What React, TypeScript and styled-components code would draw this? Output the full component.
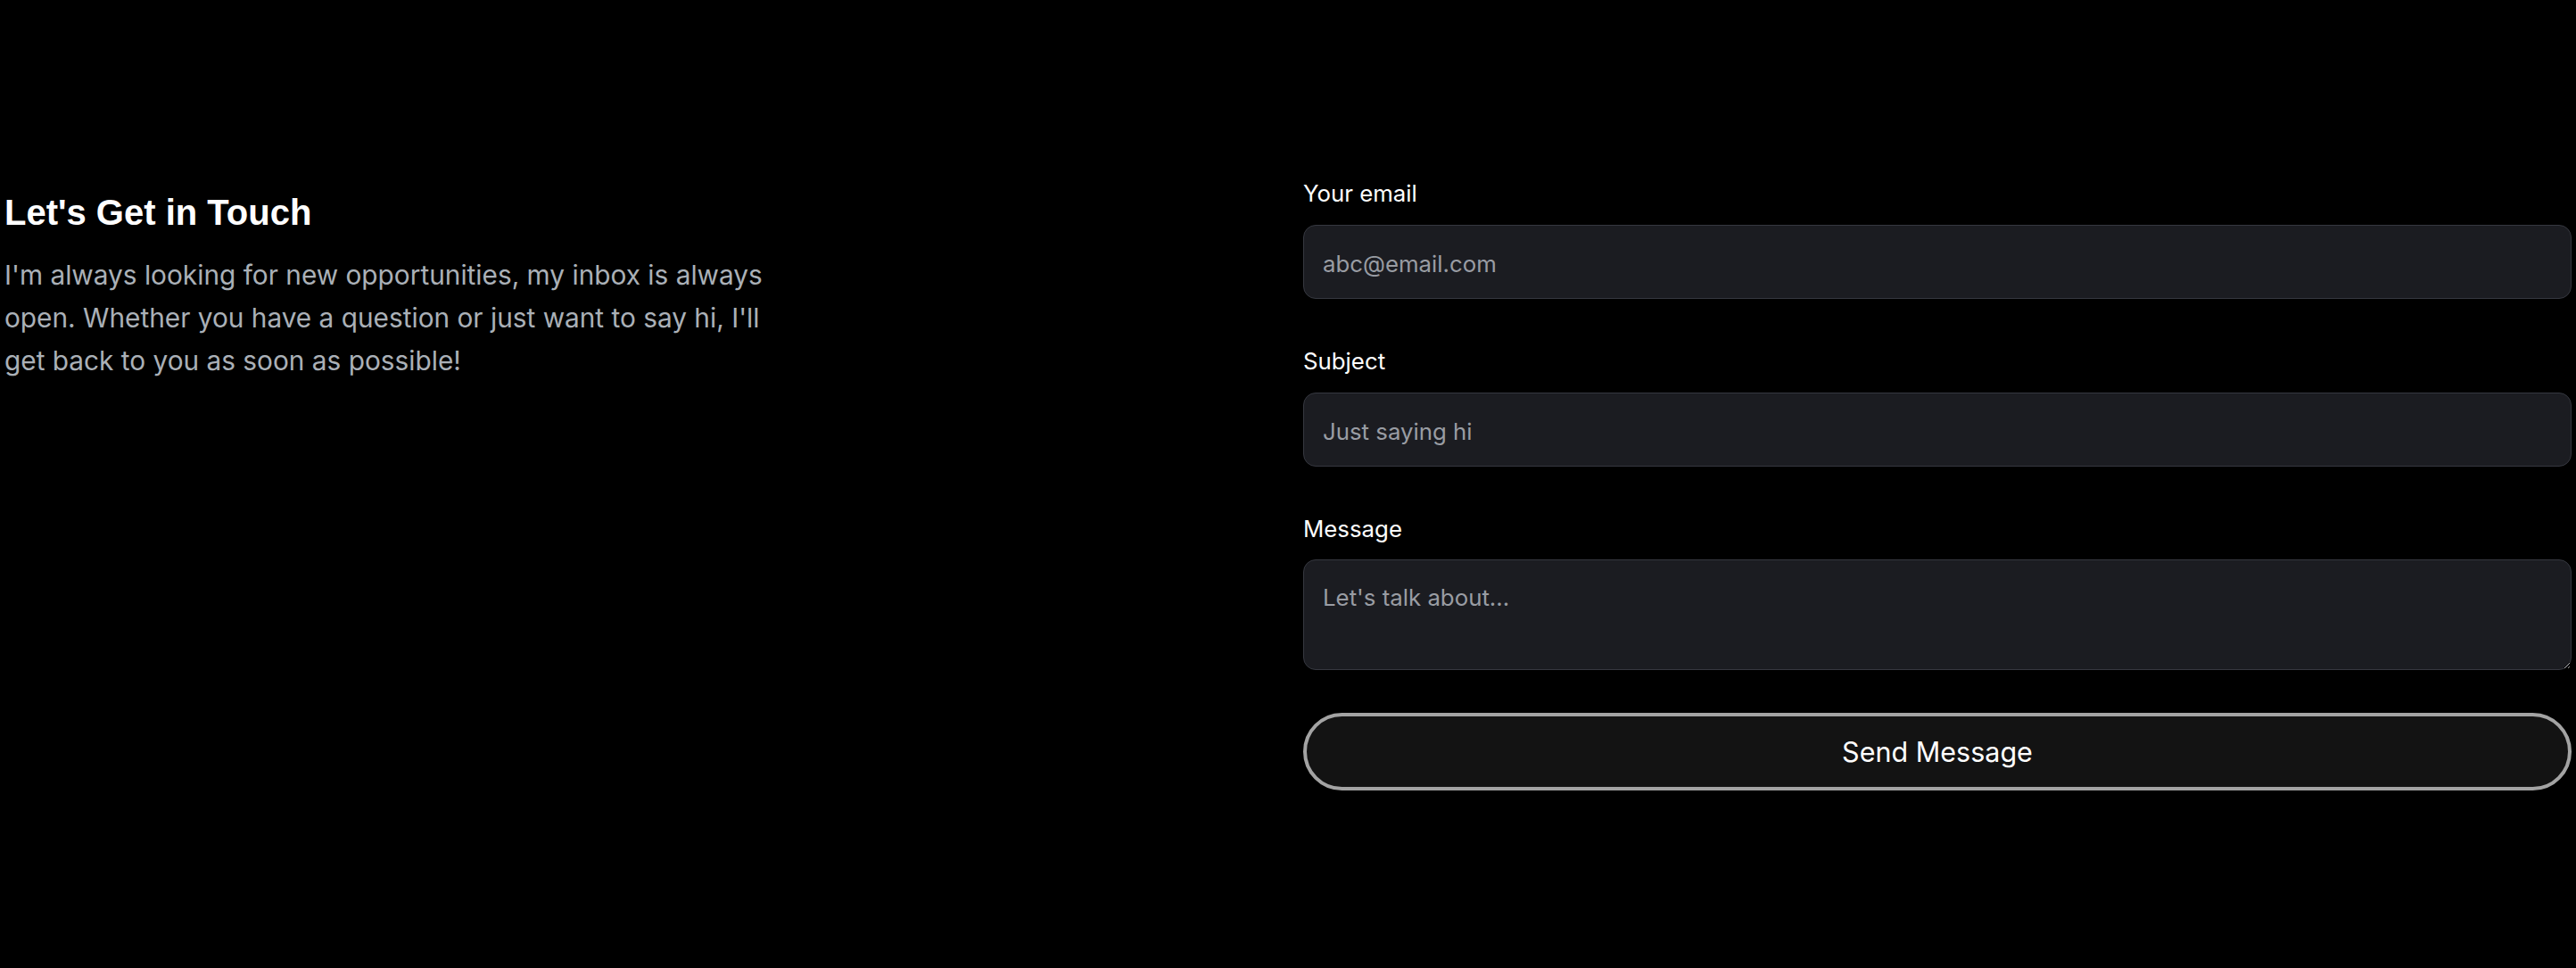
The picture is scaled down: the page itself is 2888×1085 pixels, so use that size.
import React from "react";
import styled, { createGlobalStyle } from "styled-components";

const GlobalStyle = createGlobalStyle`
  html, body {
    margin: 0;
    padding: 0;
    background: #000000;
  }
  body {
    font-family: Inter, "Liberation Sans", Arial, sans-serif;
    color: #ffffff;
  }
  * { box-sizing: border-box; }
`;

const Section = styled.section`
  display: grid;
  grid-template-columns: 1fr 1fr;
  column-gap: 34px;
  padding: 199px 5px;
  min-height: 1085px;
  background: #000000;
`;

const Intro = styled.div`
  display: flex;
  flex-direction: column;
`;

const Heading = styled.h5`
  margin: 14px 0 0;
  font-family: "Liberation Sans", Arial, Helvetica, sans-serif;
  font-size: 40px;
  line-height: 51.6px;
  font-weight: 700;
  color: #ffffff;
`;

const Blurb = styled.p`
  margin: 19px 0 0;
  max-width: 880px;
  font-family: Inter, "Liberation Sans", Arial, sans-serif;
  font-size: 29.8px;
  line-height: 48px;
  color: #aab0b7;
`;

const Form = styled.form`
  display: flex;
  flex-direction: column;
`;

const Field = styled.div<{ $gap?: number }>`
  display: flex;
  flex-direction: column;
  margin-bottom: ${(p) => p.$gap ?? 52}px;
`;

const Label = styled.label`
  display: block;
  margin-bottom: 16px;
  font-family: Inter, "Liberation Sans", Arial, sans-serif;
  font-size: 25.8px;
  line-height: 36.8px;
  color: #ffffff;
`;

const fieldBase = `
  width: 100%;
  background: #1b1c21;
  border: 1px solid #363840;
  border-radius: 14px;
  color: #f3f4f6;
  font-family: Inter, "Liberation Sans", Arial, sans-serif;
  font-size: 25.8px;
  outline: none;
  &::placeholder { color: #999ca3; }
`;

const Input = styled.input`
  ${fieldBase}
  height: 83px;
  padding: 4px 21px 0;
  line-height: 36.8px;
`;

const TextArea = styled.textarea`
  ${fieldBase}
  display: block;
  height: 124px;
  padding: 24px 21px 18px;
  line-height: 36.8px;
`;

const SendButton = styled.button`
  width: 100%;
  height: 87px;
  border-radius: 44px;
  border: 4px solid #a3a3a3;
  background: #131313;
  color: #ffffff;
  font-family: Inter, "Liberation Sans", Arial, sans-serif;
  font-size: 30.5px;
  cursor: pointer;
`;

export default function App() {
  return (
    <>
      <GlobalStyle />
      <Section>
        <Intro>
          <Heading>Let's Get in Touch</Heading>
          <Blurb>
            I'm always looking for new opportunities, my inbox is always open.
            Whether you have a question or just want to say hi, I'll get back to
            you as soon as possible!
          </Blurb>
        </Intro>
        <Form onSubmit={(e) => e.preventDefault()}>
          <Field>
            <Label htmlFor="email">Your email</Label>
            <Input id="email" type="email" placeholder="abc@email.com" />
          </Field>
          <Field>
            <Label htmlFor="subject">Subject</Label>
            <Input id="subject" type="text" placeholder="Just saying hi" />
          </Field>
          <Field $gap={48}>
            <Label htmlFor="message">Message</Label>
            <TextArea id="message" placeholder="Let's talk about..." />
          </Field>
          <SendButton type="submit">Send Message</SendButton>
        </Form>
      </Section>
    </>
  );
}
